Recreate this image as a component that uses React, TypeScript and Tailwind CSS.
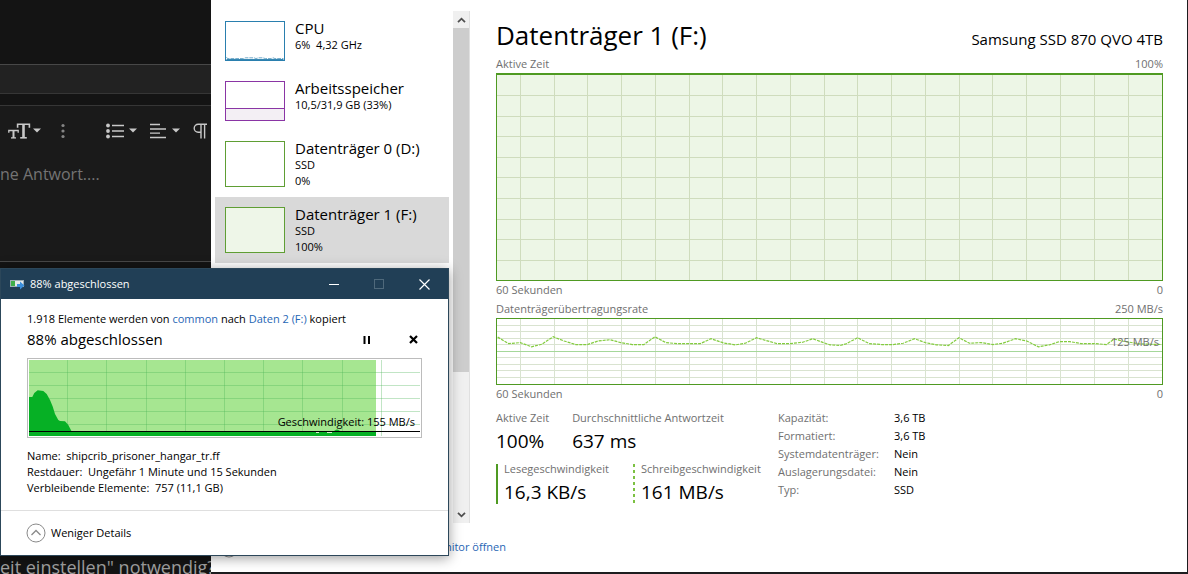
import type { ReactNode } from "react";

const GRID_X = Array.from({ length: 19 }, (_, i) => 70 + i * 101.6);

const THROUGHPUT: [number, number][] = [
  [2, 56], [35, 76], [70, 73], [104, 86], [135, 78], [169, 55], [202, 68], [237, 79], [272, 79],
  [304, 68], [340, 64], [372, 73], [407, 79], [442, 79], [475, 55], [508, 73], [542, 76], [612, 76],
  [644, 61], [682, 74], [717, 80], [747, 75], [781, 58], [842, 76], [882, 76], [920, 72], [950, 61],
  [982, 73], [1002, 80], [1032, 82], [1050, 77], [1085, 58], [1120, 76], [1157, 79], [1192, 79],
  [1222, 75], [1256, 61], [1289, 73], [1322, 80], [1358, 82], [1390, 58], [1422, 75], [1457, 73],
  [1492, 79], [1522, 75], [1560, 61], [1594, 68], [1629, 86], [1662, 80], [1692, 70], [1724, 70],
  [1757, 76], [1797, 76], [1834, 79], [1857, 62], [1882, 68], [1932, 77], [2000, 79],
];

const DETAILS = [
  ["Kapazität:", "3,6 TB"],
  ["Formatiert:", "3,6 TB"],
  ["Systemdatenträger:", "Nein"],
  ["Auslagerungsdatei:", "Nein"],
  ["Typ:", "SSD"],
];

function ToolButton({ label, children }: { label: string; children: ReactNode }) {
  return (
    <button type="button" aria-label={label} className="flex items-center text-[#c8c8c8]">
      {children}
    </button>
  );
}

function Caret() {
  return (
    <svg width="8" height="5" viewBox="0 0 8 5" className="mb-[2px]">
      <path d="M0 .5h8L4 4.5z" fill="currentColor" />
    </svg>
  );
}

function ForumPane() {
  return (
    <section className="flex w-[211px] shrink-0 flex-col overflow-hidden bg-[#141414]">
      <div className="h-16" />
      <div className="h-[30px] border-y border-t-[#484848] border-b-[#363636] bg-[#222222]" />
      <div className="h-[11px]" />
      <div className="h-[157px] border-y border-t-[#363636] border-b-[#484848] bg-[#1a1a1a]">
        <div className="flex h-[50px] items-center pl-2">
          <ToolButton label="Schriftgröße">
            <svg width="23" height="16" viewBox="0 0 23 16" fill="none" stroke="currentColor">
              <path d="M9.6 4.8V1.2h11.8v3.6" strokeWidth="1.6" />
              <path d="M15.5 1v14" strokeWidth="2.6" />
              <path d="M12.2 14.8h6.6" strokeWidth="1.6" />
              <path d="M.8 9.8V7.5h9.4v2.3" strokeWidth="1.3" />
              <path d="M5.5 7.5V15" strokeWidth="2" />
              <path d="M3 14.9h5" strokeWidth="1.3" />
            </svg>
            <span className="ml-0.5"><Caret /></span>
          </ToolButton>
          <span className="ml-5">
            <ToolButton label="Mehr">
              <svg width="4" height="16" viewBox="0 0 4 16" fill="#858585">
                <circle cx="2" cy="2.5" r="1.6" />
                <circle cx="2" cy="8" r="1.6" />
                <circle cx="2" cy="13.5" r="1.6" />
              </svg>
            </ToolButton>
          </span>
          <span className="ml-[41px]">
            <ToolButton label="Liste">
              <svg width="18" height="16" viewBox="0 0 18 16" stroke="currentColor" strokeWidth="1.3">
                <path d="M6 2.5h12M6 8h12M6 13.5h12" />
                <g fill="currentColor" stroke="none">
                  <circle cx="2" cy="2.5" r="1.9" />
                  <circle cx="2" cy="8" r="1.9" />
                  <circle cx="2" cy="13.5" r="1.9" />
                </g>
              </svg>
              <span className="ml-[5px]"><Caret /></span>
            </ToolButton>
          </span>
          <span className="ml-[13px]">
            <ToolButton label="Ausrichtung">
              <svg width="16" height="16" viewBox="0 0 16 16" stroke="currentColor" strokeWidth="1.3">
                <path d="M0 1.5h10M0 6h16M0 10.2h10M0 14.5h16" />
              </svg>
              <span className="ml-[6px]"><Caret /></span>
            </ToolButton>
          </span>
          <span className="ml-[13px]">
            <ToolButton label="Absatzformat">
              <svg width="14" height="16" viewBox="0 0 14 16" fill="none" stroke="currentColor" strokeWidth="1.4">
                <path d="M14 1.2H5.2a4 4 0 0 0 0 8H8M8 1v14.5M11.6 1v14.5" />
              </svg>
            </ToolButton>
          </span>
        </div>
        <p className="mt-[6px] text-base leading-6 whitespace-nowrap text-[#747474]">ne Antwort....</p>
      </div>
      <p className="mt-[293px] h-[19px] text-lg leading-6 whitespace-nowrap text-[#a0a0a0]">
        eit einstellen" notwendig?
      </p>
    </section>
  );
}

function ResourceItem({ title, lines, selected, thumb }: { title: string; lines: string[]; selected?: boolean; thumb: ReactNode }) {
  return (
    <li>
      <button
        type="button"
        className={`flex w-full gap-[10px] px-[10px] text-left text-black ${selected ? "bg-[#d9d9d9]" : ""} ${lines.length > 1 ? "h-[66px]" : "h-[60px]"}`}
      >
        <span className="mt-[10px] block">{thumb}</span>
        <span className="block pt-2">
          <span className="block text-[15px] leading-[18px]">{title}</span>
          {lines.map((line) => (
            <span key={line} className="block text-[11px] leading-4 whitespace-pre">{line}</span>
          ))}
        </span>
      </button>
    </li>
  );
}

function Sidebar() {
  return (
    <aside className="flex w-[259px] shrink-0 pt-[11px] pl-1">
      <ul className="flex-1">
        <ResourceItem
          title="CPU"
          lines={["6%  4,32 GHz"]}
          thumb={
            <svg width="60" height="40" viewBox="0 0 60 40" className="block border border-[#2a7fae] bg-white" fill="none">
              <path d="M0 37l1 1.500h17l2-.8h9l2 .8 3-.8h4l3 .8h6l2-.8 2 .8h9" stroke="#2a7fae" strokeOpacity=".7" strokeDasharray="4 1" />
              <path d="M0 39.500h60" stroke="#2a7fae" />
            </svg>
          }
        />
        <ResourceItem
          title="Arbeitsspeicher"
          lines={["10,5/31,9 GB (33%)"]}
          thumb={
            <span className="flex h-10 w-[60px] flex-col justify-end border border-[#8a35a5] bg-white">
              <span className="block h-3 border-t border-[#8a35a5] bg-[#f3eff4]" />
            </span>
          }
        />
        <ResourceItem
          title="Datenträger 0 (D:)"
          lines={["SSD", "0%"]}
          thumb={<span className="block h-[46px] w-[60px] border border-[#5f9e34] bg-white" />}
        />
        <ResourceItem
          title="Datenträger 1 (F:)"
          lines={["SSD", "100%"]}
          selected
          thumb={<span className="block h-[46px] w-[60px] border border-[#5f9e34] bg-[#eef6e8]" />}
        />
      </ul>
      <div className="ml-1 flex w-[17px] flex-col border-r border-[#e0e0e0] bg-[#f0f0f0] text-[#505050]">
        <button type="button" aria-label="Nach oben" className="flex h-[17px] items-center justify-center">
          <svg width="9" height="6" viewBox="0 0 9 6" fill="none" stroke="currentColor" strokeWidth="1.8"><path d="M1 5.200l3.500-3.500L8 5.200" /></svg>
        </button>
        <div className="flex-[344] bg-[#cdcdcd]" />
        <div className="flex-[134]" />
        <button type="button" aria-label="Nach unten" className="flex h-[17px] items-center justify-center">
          <svg width="9" height="6" viewBox="0 0 9 6" fill="none" stroke="currentColor" strokeWidth="1.8"><path d="M1 .8l3.500 3.500L8 .8" /></svg>
        </button>
      </div>
    </aside>
  );
}

function Axis({ left, right }: { left: string; right: string }) {
  return (
    <div className="flex justify-between text-[11px] leading-4 text-[#707070]">
      <span>{left}</span>
      <span>{right}</span>
    </div>
  );
}

function ActivityChart() {
  return (
    <svg className="block h-[208px] w-full border border-t-2 border-[#4f9a22] bg-[#edf6e6]" viewBox="0 0 2001 208" preserveAspectRatio="none">
      <g stroke="#cfdcbd" shapeRendering="crispEdges">
        {GRID_X.map((x) => <line key={x} x1={x} x2={x} y1="0" y2="208" vectorEffect="non-scaling-stroke" />)}
        {[1, 2, 3, 4, 5, 6, 7, 8, 9].map((n) => <line key={n} x1="0" x2="2001" y1={n * 20.9} y2={n * 20.9} vectorEffect="non-scaling-stroke" />)}
      </g>
    </svg>
  );
}

function ThroughputChart() {
  return (
    <div className="relative">
      <svg className="block h-[67px] w-full border border-[#4f9a22] bg-white" viewBox="0 0 2001 201" preserveAspectRatio="none" fill="none">
        <g stroke="#d9e3d0" shapeRendering="crispEdges">
          {GRID_X.map((x) => <line key={x} x1={x} x2={x} y1="0" y2="201" vectorEffect="non-scaling-stroke" />)}
          {[1, 2, 3, 4, 6, 7, 8, 9].map((n) => <line key={n} x1="0" x2="2001" y1={n * 20} y2={n * 20} vectorEffect="non-scaling-stroke" />)}
          <line x1="0" x2="2001" y1="100" y2="100" stroke="#a5d79a" vectorEffect="non-scaling-stroke" />
        </g>
        <polyline points={THROUGHPUT.map((p) => p.join(",")).join(" ")} stroke="#83cc3f" strokeWidth="1.2" strokeDasharray="3 1" vectorEffect="non-scaling-stroke" />
      </svg>
      <span className="absolute top-4 right-1 text-[11px] leading-4 text-[#707070]">125 MB/s</span>
    </div>
  );
}

function Stat({ label, value }: { label: string; value: string }) {
  return (
    <div className="whitespace-nowrap">
      <div className="text-[11px] leading-4 text-[#707070]">{label}</div>
      <div className="text-[19px] leading-[30px] text-black">{value}</div>
    </div>
  );
}

function PerformanceDetails() {
  return (
    <main className="min-w-0 flex-1 pt-[15px] pr-6 pl-[26px]">
      <header className="flex h-[41px] items-start justify-between text-black">
        <h1 className="text-[26px] leading-10">Datenträger 1 (F:)</h1>
        <span className="pt-2 text-[15px] leading-8">Samsung SSD 870 QVO 4TB</span>
      </header>
      <Axis left="Aktive Zeit" right="100%" />
      <div className="h-px" />
      <ActivityChart />
      <div className="h-px" />
      <Axis left="60 Sekunden" right="0" />
      <div className="h-[3px]" />
      <Axis left="Datenträgerübertragungsrate" right="250 MB/s" />
      <div className="h-px" />
      <ThroughputChart />
      <div className="h-px" />
      <Axis left="60 Sekunden" right="0" />
      <div className="mt-2 flex">
        <div className="w-[282px] shrink-0">
          <div className="flex gap-[23px]">
            <Stat label="Aktive Zeit" value="100%" />
            <Stat label="Durchschnittliche Antwortzeit" value="637 ms" />
          </div>
          <div className="mt-2 flex">
            <div className="h-10 w-[137px] border-l-2 border-[#4f9a22] pl-[6px]">
              <div className="-mt-[3px]"><Stat label="Lesegeschwindigkeit" value="16,3 KB/s" /></div>
            </div>
            <div className="flex h-10 gap-[6px]">
              <svg width="2" height="40" viewBox="0 0 2 40">
                <path d="M1 0v40" stroke="#7cc142" strokeWidth="2" strokeDasharray="3 3" />
              </svg>
              <div className="-mt-[3px]"><Stat label="Schreibgeschwindigkeit" value="161 MB/s" /></div>
            </div>
          </div>
        </div>
        <table className="-mt-px self-start text-left text-[11px] leading-[18px]">
          <tbody>
            {DETAILS.map(([label, value]) => (
              <tr key={label}>
                <th scope="row" className="w-[116px] p-0 font-normal text-[#707070]">{label}</th>
                <td className="p-0 text-black">{value}</td>
              </tr>
            ))}
          </tbody>
        </table>
      </div>
    </main>
  );
}

function TaskManager() {
  return (
    <section className="mr-px mb-[2px] flex min-w-0 flex-1 flex-col bg-white">
      <div className="flex flex-1">
        <Sidebar />
        <PerformanceDetails />
      </div>
      <footer className="flex h-[49px] w-[295px] items-center justify-between pl-2 text-[11px] text-[#1f66b5]">
        <button type="button" aria-label="Weniger Details"><CollapseIcon /></button>
        <a href="#resmon" className="whitespace-nowrap">Ressourcenmonitor öffnen</a>
      </footer>
    </section>
  );
}

function CollapseIcon() {
  return (
    <svg width="20" height="20" viewBox="0 0 20 20" fill="none" stroke="#8a8a8a">
      <circle cx="10" cy="10" r="9" />
      <path d="M5.500 12L10 7.500l4.500 4.500" strokeWidth="1.300" />
    </svg>
  );
}

function SpeedGraph() {
  return (
    <div className="relative border border-[#bcbcbc] bg-white p-px">
      <svg className="block w-full" viewBox="29 360 391 76" fill="none">
        <rect x="29" y="360" width="347" height="76" fill="#a6e691" />
        <path
          d="M67.500 360v76M106.500 360v76M146.500 360v76M185.500 360v76M224.500 360v76M263.500 360v76M302.500 360v76M342.500 360v76M381.500 360v76M29 372.500h391M29 385.500h391M29 398.500h391M29 411.500h391M29 424.500h391"
          stroke="#4db45a" strokeOpacity=".35"
        />
        <path d="M29 397h3.300l2-4 3.400-2.700 5.600.7 3.400 3 3.300 6 2.700 6.600 2.300 7.400 3.300 6 1.700 1 5 .3 3.300 3.700 3.400 6.500H376v4.500H29z" fill="#06b025" />
        <path d="M316 432.500h3M327 432.500h5" stroke="#d8f5cf" />
        <path d="M334 431q3-3 6 0z" fill="#06b025" />
        <path d="M29 431.500h391" stroke="#000" />
      </svg>
      <span className="absolute right-[6px] bottom-[7px] text-[11px] leading-4 text-black">Geschwindigkeit: 155 MB/s</span>
    </div>
  );
}

function CopyDialog() {
  return (
    <section
      role="dialog"
      aria-label="88% abgeschlossen"
      className="absolute top-[268px] left-0 w-[449px] border border-[#2c475a] bg-white text-[11px] leading-4 text-black shadow-[0_2px_12px_rgba(0,0,0,0.4)]"
    >
      <header className="flex h-[30px] items-center bg-[#213f56] text-white">
        <svg width="16" height="12" viewBox="0 0 16 12" className="ml-2">
          <rect x="1.500" y="2.500" width="13" height="6" fill="#e5e9ea" stroke="#9fb0b5" />
          <rect x="2" y="3" width="4" height="5" fill="#3fae49" />
          <path d="M8 6h3V3.500l4.500 4-4.500 4V9H8z" fill="#3c8fdb" />
        </svg>
        <h2 className="ml-[5px] flex-1">88% abgeschlossen</h2>
        <button type="button" aria-label="Minimieren" className="flex h-full w-[45px] items-center justify-center">
          <svg width="10" height="10" viewBox="0 0 10 10"><path d="M0 5.500h10" stroke="currentColor" /></svg>
        </button>
        <button type="button" disabled aria-label="Maximieren" className="flex h-full w-[45px] items-center justify-center text-[#4f697b]">
          <svg width="10" height="10" viewBox="0 0 10 10" fill="none"><rect x=".5" y=".5" width="9" height="9" stroke="currentColor" /></svg>
        </button>
        <button type="button" aria-label="Schließen" className="flex h-full w-[47px] items-center justify-center">
          <svg width="11" height="11" viewBox="0 0 11 11"><path d="M.5.5l10 10M10.500.5l-10 10" stroke="currentColor" strokeWidth="1.200" /></svg>
        </button>
      </header>
      <div className="px-[26px] pt-3 pb-[14px]">
        <p>
          1.918 Elemente werden von <a href="#common" className="text-[#1f66b5]">common</a> nach{" "}
          <a href="#daten2" className="text-[#1f66b5]">Daten 2 (F:)</a> kopiert
        </p>
        <div className="flex h-6 items-center">
          <h3 className="flex-1 text-[15px] leading-6">88% abgeschlossen</h3>
          <button type="button" aria-label="Anhalten" className="mr-[38px]">
            <svg width="8" height="9" viewBox="0 0 8 9" className="block"><path d="M1.500 1v8M6 1v8" stroke="#000" strokeWidth="2" /></svg>
          </button>
          <button type="button" aria-label="Abbrechen" className="mr-1">
            <svg width="9" height="9" viewBox="0 0 9 9" className="block"><path d="M1 1l7 7M8 1L1 8" stroke="#000" strokeWidth="2.200" /></svg>
          </button>
        </div>
        <div className="mt-[7px]"><SpeedGraph /></div>
        <div className="mt-[10px]">
          <p>Name:&nbsp; shipcrib_prisoner_hangar_tr.ff</p>
          <p>Restdauer:&nbsp; Ungefähr 1 Minute und 15 Sekunden</p>
          <p>Verbleibende Elemente:&nbsp; 757 (11,1 GB)</p>
        </div>
      </div>
      <footer className="flex h-[45px] items-center border-t border-[#dfdfdf] px-[25px]">
        <button type="button" className="flex items-center gap-[5px]">
          <CollapseIcon />
          Weniger Details
        </button>
      </footer>
    </section>
  );
}

export default function App() {
  return (
    <div className="relative flex min-h-screen overflow-hidden bg-[#1d1d1f] font-['Open_Sans',sans-serif]">
      <ForumPane />
      <TaskManager />
      <CopyDialog />
    </div>
  );
}
